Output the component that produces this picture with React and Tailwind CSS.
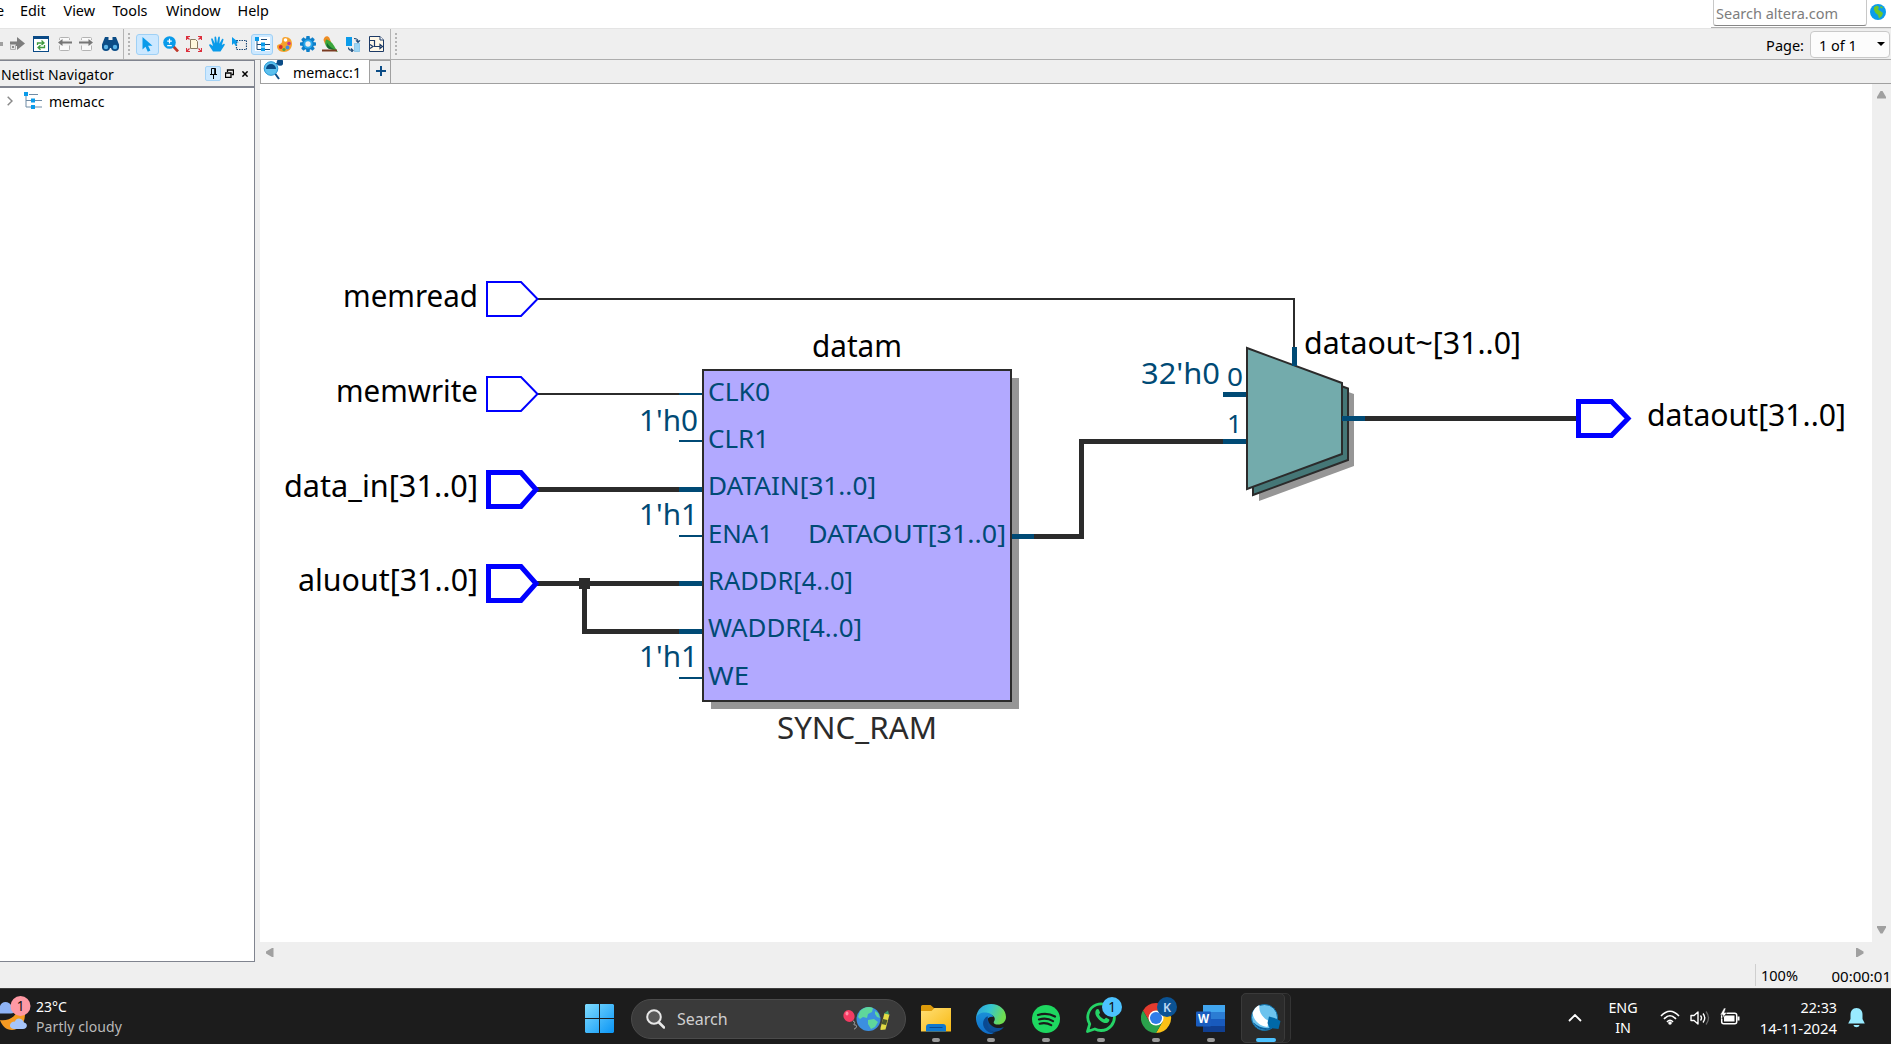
import React from "react";

const FONT = "font-['Noto_Sans','Open_Sans',sans-serif]";

/* ---------- toolbar icons ---------- */
const Svg = ({ w = 16, h = 16, box, children, className = "" }) => (
  <svg width={w} height={h} viewBox={box || `0 0 ${w} ${h}`} className={`block shrink-0 ${className}`}>{children}</svg>
);

const ForwardIcon = () => (
  <Svg w={15} h={14}><path d="M0 4.500h7V0l8 6.500L7 13V9H0z" fill="#7d7d7d" /><path d="M.500 7.500h5v5h-5z" fill="#e4e4e4" stroke="#b0b0b0" /><path d="M2 9h2v2H2z" fill="#8a8a8a" /></Svg>
);
const RefreshIcon = () => (
  <Svg>
    <rect x=".5" y=".5" width="15" height="15" fill="#fff" stroke="#0a4a86" />
    <rect width="16" height="3" fill="#0a4a86" />
    <path d="M4.500 9V7h6M8.500 4.500L11 7 8.500 9M11.500 9v2.500H5.500M7.500 9.200L5 11.500l2.500 2.300" fill="none" stroke="#3f9a3f" strokeWidth="1.300" />
  </Svg>
);
const PageArrow = ({ flip }) => (
  <Svg w={14} h={14}>
    <g transform={flip ? "translate(14 0) scale(-1 1)" : undefined}>
      <path d="M1.500 3V1.500a1 1 0 011-1h8a1 1 0 011 1V3M1.500 8.500v4a1 1 0 001 1h8a1 1 0 001-1v-4" fill="#fafafa" stroke="#b3b3b3" />
      <path d="M0 5.500L4.500 2v2.500H14v2H4.500V9z" fill="#777" />
    </g>
  </Svg>
);
const BinocularsIcon = () => (
  <Svg w={17} h={14}>
    <path d="M3 0h3.500v3h4V0H14l3 7.500V11H0V7.500z" fill="#0b4c86" />
    <circle cx="4" cy="10" r="4" fill="#0b4c86" /><circle cx="13" cy="10" r="4" fill="#0b4c86" />
    <circle cx="4" cy="10" r="2.200" fill="#5bb4e8" /><circle cx="13" cy="10" r="2.200" fill="#5bb4e8" />
  </Svg>
);
const PointerIcon = () => (
  <Svg w={11} h={15}><path d="M.5 0v12.500l3-2.800 2.300 5 2.600-1.200-2.300-4.800h4.400z" fill="#0a9bea" /></Svg>
);
const ZoomIcon = () => (
  <Svg>
    <path d="M9.500 9.500l5.500 6" stroke="#c0392b" strokeWidth="2.600" />
    <circle cx="6.500" cy="6.500" r="6.300" fill="#0a9bea" />
    <path d="M6.500 2.800v4.600M4.200 5.100h4.600M4.200 9.600h4.600" stroke="#fff" strokeWidth="1.200" />
  </Svg>
);
const FitIcon = () => (
  <Svg>
    <path d="M4.500 3.500h5l2 2v7h-7z" fill="#fff8dc" stroke="#8a7a60" />
    <path d="M.5 4V.5H4M.5.5l3 3M12 .5h3.500V4M15.500.5l-3 3M.5 12v3.500H4M.5 15.500l3-3M12 15.500h3.500V12M15.500 15.500l-3-3" fill="none" stroke="#dc2f3c" strokeWidth="1.200" />
  </Svg>
);
const HandIcon = () => (
  <Svg w={16} h={16}>
    <path d="M4 15.500C2.600 13 1 11 .2 9.400c-.4-1 .8-1.500 1.600-.8L4 10 2.200 3.500c-.3-1.200 1.200-1.600 1.600-.5L5.700 7.500 5.500 1.300c0-1.200 1.600-1.200 1.700 0l.8 6 1.200-6C9.500.1 11 .4 10.900 1.500l-.5 6.300 2.500-4.500c.6-1 1.900-.4 1.500.7L12.800 9l1.700-1c1-.5 1.800.5 1 1.300l-4 6.200z" fill="#0a9bea" />
  </Svg>
);
const SelectIcon = () => (
  <Svg w={15} h={14}>
    <rect x="4.500" y="3.500" width="10" height="9" fill="none" stroke="#1d4a78" strokeWidth="1.200" strokeDasharray="1.500 1" />
    <path d="M0 0v8l2-1.700L3.600 9l1.500-.8L3.800 5.600h3z" fill="#0a9bea" />
  </Svg>
);
const TreeIcon = () => (
  <Svg w={15} h={14}>
    <rect width="15" height="14" fill="#fff" />
    <path d="M2 3v9.500h4M2 7.500h4M6 2.500h6M10 7.500h5M10 12.500h5" fill="none" stroke="#1d4a78" />
    <rect x="0" y="0" width="4" height="4" fill="#0a9bea" /><rect x="6" y="5.500" width="4" height="4" fill="#0a9bea" /><rect x="6" y="10.500" width="4" height="3.500" fill="#0a9bea" />
  </Svg>
);
const PaletteIcon = () => (
  <Svg w={15} h={15}>
    <path d="M8 0c5 0 7 3 7 7 0 5-4 8-8 8-4.500 0-7-3-7-5.500C0 7 3 8 4.500 6S4 0 8 0z" fill="#f7a12b" />
    <circle cx="8.500" cy="3" r="1.800" fill="#fff" /><circle cx="12" cy="6.500" r="1.800" fill="#c9348b" /><circle cx="10.500" cy="10.500" r="1.900" fill="#3f8fe0" /><circle cx="3.800" cy="10" r="1.900" fill="#d62f2f" /><circle cx="7" cy="12.500" r="1.600" fill="#4aa84a" />
  </Svg>
);
const GearIcon = () => (
  <Svg>
    <g transform="translate(8 8)" fill="#0d7fc9">
      {[0, 45, 90, 135].map((a) => <rect key={a} x="-1.800" y="-8" width="3.600" height="16" rx=".8" transform={`rotate(${a})`} />)}
      <circle r="6" /><circle r="4.600" fill="#29a9ee" /><circle r="2.700" fill="#efefef" />
    </g>
  </Svg>
);
const BirdIcon = () => (
  <Svg w={17} h={16}>
    <path d="M1.500 4C2 1 4-.3 6 .5 8 1.500 8 4 9 6L3 8z" fill="#ef8b22" />
    <path d="M4 3.500c4 .5 7 4 9 8l3 4.500-7-2.500C5 12 1.500 9 4 3.500z" fill="#3ba63a" />
    <path d="M5 7c2 3 4 5 8 6.500l-6-.5C5 12 4 9 5 7z" fill="#186b2f" />
    <path d="M0 14.500h15" stroke="#7a3b22" strokeWidth="2" />
  </Svg>
);
const SwapIcon = () => (
  <Svg w={15} h={15}>
    <rect x="0" y="0" width="6" height="9" fill="#0a9bea" />
    <rect x="8.500" y="6.500" width="5" height="8" fill="#9bd4f4" stroke="#58b2e4" strokeDasharray="1 1" />
    <path d="M8 1.500c3 0 4 1 4 3M10 3.300l2 2 2-2M2.500 10.500c0 2 1 3 4 3M5 11.500l2 2-2 2" fill="none" stroke="#1d4a78" strokeWidth="1.200" />
  </Svg>
);
const SchematicIcon = () => (
  <Svg w={15} h={16}>
    <path d="M.5.500h10.500l3.500 3.500v11.500H.5z" fill="#fff8e8" stroke="#1d3a66" />
    <path d="M0 4.500h5.500v6h6M11 8.500l2.500 2-2.500 2zM1 12.500l3-2-3-2" fill="none" stroke="#1d3a66" strokeWidth="1.200" />
    <path d="M11 .5V4h3.500" fill="#fff" stroke="#1d3a66" />
  </Svg>
);
const Grip = ({ className = "" }) => (
  <svg width="3" height="22" className={`block shrink-0 ${className}`}>
    {[0, 1, 2, 3, 4, 5].map((i) => <rect key={i} x="0" y={i * 4} width="2" height="2" fill="#b4b4b4" />)}
  </svg>
);

/* ---------- menu, toolbar ---------- */
function MenuBar() {
  return (
    <div className="flex h-[28px] shrink-0 items-start bg-white text-[14.400px] leading-[20px] text-black">
      <div className="flex pt-[1px]">
        <span className="-ml-[4px] w-[24px]">e</span>
        <span className="w-[43.500px]">Edit</span>
        <span className="w-[49px]">View</span>
        <span className="w-[53.500px]">Tools</span>
        <span className="w-[71.500px]">Window</span>
        <span>Help</span>
      </div>
      <div className="ml-auto flex h-[28px] w-[180px] border-b border-[#b0b0b0]">
        <div className="ml-[2px] flex h-[26px] w-[154px] items-center rounded-b-[3px] border border-t-0 border-[#c8c8c8] border-b-[#868686] pl-[2px] pt-[1px] text-[14.500px] text-[#7d7d7d]">Search altera.com</div>
        <Svg w={16} h={16} className="ml-[3px] mt-[4px]">
          <circle cx="8" cy="8" r="8" fill="#0a9dec" />
          <path d="M4 3l3-1.500 2 1.500-1 2.500 3 2 2 1.500-1 3-3 2.500-1-3.500-2.500-2L4 6zM11 2l2 1.500-1 1-2-1z" fill="#6fc72b" />
        </Svg>
      </div>
    </div>
  );
}

const Slot = ({ w, children, active }) => (
  <div className={`flex h-[21px] shrink-0 items-center justify-center ${w} ${active ? "rounded-[3px] border border-[#9fd0f5] bg-[#cce8ff]" : ""}`}>{children}</div>
);

function Toolbar() {
  return (
    <div className="flex h-[32px] shrink-0 items-center border-b border-[#adadad] border-t border-t-[#e4e4e4] bg-[#efefef]">
      <div className="h-[4px] w-[3px] bg-[#a0a0a0]" />
      <div className="ml-[7px]"><ForwardIcon /></div>
      <div className="ml-[8px]"><RefreshIcon /></div>
      <div className="ml-[9px]"><PageArrow /></div>
      <div className="ml-[7px]"><PageArrow flip /></div>
      <div className="ml-[9px]"><BinocularsIcon /></div>
      <div className="ml-[4px] h-[30px] w-px bg-[#b5b5b5]" />
      <Grip className="ml-[4px]" />
      <div className="ml-[5px] flex items-center">
        <Slot w="w-[23px]" active><PointerIcon /></Slot>
        <Slot w="w-[23px]"><ZoomIcon /></Slot>
        <Slot w="w-[23px]"><FitIcon /></Slot>
        <Slot w="w-[23px]"><HandIcon /></Slot>
        <Slot w="w-[23px]"><SelectIcon /></Slot>
        <Slot w="w-[22px]" active><TreeIcon /></Slot>
        <Slot w="w-[23px]"><PaletteIcon /></Slot>
        <Slot w="w-[23px]"><GearIcon /></Slot>
        <Slot w="w-[23px]"><BirdIcon /></Slot>
        <Slot w="w-[23px]"><SwapIcon /></Slot>
        <Slot w="w-[23px]"><SchematicIcon /></Slot>
      </div>
      <div className="ml-[2px] h-[30px] w-px bg-[#b5b5b5]" />
      <Grip className="ml-[4px]" />
      <div className="ml-auto flex items-center text-[14.500px] text-black">
        <span className="mr-[6px] mt-[3px]">Page:</span>
        <div className="mr-[1px] flex h-[27px] w-[80px] items-center rounded-[4px] border border-[#c9c9c9] bg-[#fcfcfc] pl-[8px]">
          <span className="mt-[3px]">1 of 1</span>
          <Svg w={8} h={4} className="ml-auto mr-[4px]"><path d="M0 0h8L4 4z" fill="#000" /></Svg>
        </div>
      </div>
    </div>
  );
}

/* ---------- navigator ---------- */
function Navigator() {
  return (
    <div className="flex h-[902px] w-[255px] shrink-0 flex-col border-b border-r border-[#80848f] bg-white">
      <div className="flex h-[28px] shrink-0 items-center border-b-2 border-t border-[#80848f] bg-[#efefef]">
        <span className="ml-[1px] mt-[2px] text-[14px] tracking-[0.1px] text-black">Netlist Navigator</span>
        <div className="ml-auto mr-[6px] flex items-center">
          <div className="flex h-[15px] w-[16px] items-center justify-center rounded-[2px] border border-[#a4d3f7] bg-[#cce8ff] pl-px">
            <Svg w={7} h={11}><path d="M1.500 6V.500h4V6M0 6.500h7M3.500 6.500V11M4.700 0v6" fill="none" stroke="#000" /></Svg>
          </div>
          <Svg w={9} h={9} className="ml-[4px]"><path d="M2.500 3V1h6v4.500H6.500M2 .8h7" fill="none" stroke="#000" strokeWidth="1.300" /><path d="M.5 4h5.500v4.300H.5zM0 4h6.500" fill="none" stroke="#000" strokeWidth="1.300" /></Svg>
          <Svg w={6} h={6} className="ml-[8px]"><path d="M.4.4l5.200 5.200M5.600.4L.4 5.600" stroke="#000" strokeWidth="1.500" /></Svg>
        </div>
      </div>
      <div className="flex h-[25px] items-center">
        <Svg w={6} h={10} className="ml-[7px]"><path d="M.7.7L5 5 .7 9.300" fill="none" stroke="#8a8a8a" strokeWidth="1.500" /></Svg>
        <Svg w={18} h={17} className="ml-[11px]">
          <path d="M2 3v12h5M2 8.500h5M5 2.500h9M11 8.500h7M11 15h7" fill="none" stroke="#6f8ba5" />
          <rect x="0" y="0" width="4" height="4" fill="#0a9bea" /><rect x="7" y="6.500" width="4" height="4" fill="#0a9bea" /><rect x="7" y="13" width="4" height="4" fill="#0a9bea" />
        </Svg>
        <span className="ml-[7px] mt-[2px] text-[14px] text-black">memacc</span>
      </div>
    </div>
  );
}

/* ---------- schematic ---------- */
const INK = "#2b2b2b";
const PIN = "#004a75";

const LABELS = [
  ["memread", 343, 307, 135, 30, "#000"],
  ["memwrite", 336, 402, 142, 30, "#000"],
  ["data_in[31..0]", 284, 496.500, 194, 30, "#000"],
  ["aluout[31..0]", 298, 591, 180, 30, "#000"],
  ["1'h0", 639, 431, 59, 29, PIN],
  ["1'h1", 639, 525, 59, 29, PIN],
  ["1'h1", 639, 667, 59, 29, PIN],
  ["CLK0", 708, 401, 62, 25, PIN],
  ["CLR1", 708, 448, 61, 25, PIN],
  ["DATAIN[31..0]", 708, 495, 168, 25, PIN],
  ["ENA1", 708, 543, 65, 25, PIN],
  ["DATAOUT[31..0]", 808, 543, 198, 25, PIN],
  ["RADDR[4..0]", 708, 590, 145, 25, PIN],
  ["WADDR[4..0]", 708, 637, 154, 25, PIN],
  ["WE", 708, 685, 41, 25, PIN],
  ["datam", 812, 357, 90, 30, "#000"],
  ["SYNC_RAM", 777, 739, 160, 30, INK],
  ["32'h0", 1141, 384, 79, 29, PIN],
  ["0", 1227, 385.500, 16, 25, PIN],
  ["1", 1227, 433, 15, 25, PIN],
  ["dataout~[31..0]", 1304, 353.500, 217, 30, "#000"],
  ["dataout[31..0]", 1647, 426, 199, 30, "#000"],
];

function Schematic() {
  return (
    <svg width="1612" height="858" viewBox="260 84 1612 858" className="block shrink-0 bg-white">
      <g fill="none" stroke={INK} strokeWidth="2" shapeRendering="crispEdges">
        <path d="M537 299H1294V347M537 394H679" />
        <path d="M536 489.500H679M536 583.500H679M584.500 583.500V631.500H679M1034 536.500H1081.500V441.500H1223M1365 418.500H1577" strokeWidth="5" />
      </g>
      <rect x="579" y="578" width="11" height="11" fill={INK} />
      <rect x="711" y="378" width="308" height="331" fill="#969696" />
      <rect x="703" y="370" width="308" height="331" fill="#b2a9ff" stroke={INK} strokeWidth="2" />
      <path d="M1259 360L1354 394V466L1259 501z" fill="#969696" />
      <path d="M1253 354L1348 388.500V460L1253 495z" fill="#457777" stroke={INK} strokeWidth="2" />
      <path d="M1247 348L1342 383V454L1247 489z" fill="#73abac" stroke={INK} strokeWidth="2" />
      <g fill="none" stroke={PIN} strokeWidth="5" shapeRendering="crispEdges">
        <path d="M679 394H702M679 441H702M679 536H702M679 678H702" strokeWidth="2" />
        <path d="M679 489.500H702M679 583.500H702M679 631.500H702M1012 536.500H1034M1223 394.500H1246M1223 441.500H1246M1342 418.500H1365M1294.500 347V366" />
      </g>
      <g fill="#fff" stroke="#0000ff">
        <path d="M487 282H521L537.500 299 521 316H487z" strokeWidth="2" />
        <path d="M487 377H521L537.500 394 521 411H487z" strokeWidth="2" />
        <path d="M488.500 472.500H521L536 489.500 521 506.500H488.500z" strokeWidth="5" />
        <path d="M488.500 566.500H521L536 583.500 521 600.500H488.500z" strokeWidth="5" />
        <path d="M1578.500 401.500H1611.500L1628 418.500 1611.500 435.500H1578.500z" strokeWidth="5" />
      </g>
      {LABELS.map(([t, x, y, w, s, c], i) => (
        <text key={i} x={x} y={y} fontSize={s} fill={c} textLength={w} lengthAdjust="spacingAndGlyphs">{t}</text>
      ))}
    </svg>
  );
}

function Workspace() {
  return (
    <div className="ml-[5px] flex min-w-0 flex-1 flex-col">
      <div className="flex h-[24px] shrink-0 border-b border-[#a0a0a0]">
        <div className="-mb-px flex h-[24px] w-[110px] items-center border border-t-0 border-[#a0a0a0] bg-white">
          <Svg w={20} h={20} className="ml-[2px] -mt-[3px]">
            <path d="M11 12l5 7" stroke="#0b4c86" strokeWidth="2" />
            <path d="M11 5l5-3" stroke="#0b4c86" /><circle cx="17" cy="2.500" r="3.300" fill="#0b4c86" />
            <circle cx="8" cy="8.500" r="7" fill="#5cc0ee" /><path d="M3 9a5 5 0 0110 0z" fill="#0b4c86" /><circle cx="8" cy="8.500" r="6.800" fill="none" stroke="#2e9bd6" />
          </Svg>
          <span className="ml-[10px] mt-[2px] text-[14.200px] text-black">memacc:1</span>
        </div>
        <div className="-mb-px flex h-[24px] w-[21px] items-center justify-center border border-l-0 border-[#a0a0a0] pb-[2px] pl-px">
          <Svg w={10} h={10}><path d="M5 0v10M0 5h10" stroke="#0b4c86" strokeWidth="2" /></Svg>
        </div>
      </div>
      <div className="flex">
        <Schematic />
        <div className="flex w-[19px] flex-col items-center justify-between pb-[8px] pt-[7px]">
          <Svg w={9} h={8}><path d="M3.500 0h2L9 6v1.500H0V6z" fill="#a0a0a0" /></Svg>
          <Svg w={9} h={8}><path d="M0 0h9v1.500l-3.500 6h-2L0 1.500z" fill="#a0a0a0" /></Svg>
        </div>
      </div>
      <div className="flex h-[20px] w-[1612px] items-center justify-between pl-[6px] pr-[8px]">
        <Svg w={8} h={9}><path d="M7.500 0v9H6L0 5.500v-2L6 0z" fill="#a0a0a0" /></Svg>
        <Svg w={8} h={9}><path d="M0 0v9h1.500l6-3.500v-2l-6-3.500z" fill="#a0a0a0" /></Svg>
      </div>
    </div>
  );
}

/* ---------- taskbar ---------- */
const TaskItem = ({ children }) => (
  <div className="relative flex h-[55px] w-[55px] shrink-0 items-center justify-center pt-[4px]">
    {children}
    <div className="absolute bottom-[2px] h-[4px] w-[8px] rounded-full bg-[#9a9a9a]" />
  </div>
);

const WeatherIcon = () => (
  <Svg w={31} h={38} className="mt-[2px]">
    <path d="M0 25c7 1 15-2 17-9l8 3c0 10-6 16-13 16C6 35 2 31 0 25z" fill="#f59a22" />
    <path d="M-5 18.500h16c5 0 5-6 1-6.500C10 6 2 5 0 11h-5z" fill="#8fb4f5" />
    <path d="M14 34h9c5 0 5-6 1-6.500-2-5-8-5-9-1-6 0-7 7-1 7.500z" fill="#a6c5fb" />
    <circle cx="20.500" cy="11" r="10" fill="#ff99a4" />
    <text x="20.500" y="16" fontSize="13.500" textAnchor="middle" fill="#111">1</text>
  </Svg>
);

const StartIcon = () => (
  <Svg w={29} h={29} className="mt-[4px]">
    <defs><linearGradient id="win" x1="0" y1="0" x2="1" y2="1"><stop offset="0" stopColor="#7fdcff" /><stop offset="1" stopColor="#0a95f5" /></linearGradient></defs>
    <path d="M1 0h13v14H0V1zM15 0h13l1 1v13H15zM0 15h14v14H1l-1-1zM15 15h14v13l-1 1H15z" fill="url(#win)" />
  </Svg>
);

const SearchArt = () => (
  <Svg w={48} h={26}>
    <path d="M10 15c4 1-1 4 2 4s1 4-1 4" fill="none" stroke="#aaa" />
    <ellipse cx="6" cy="10" rx="5.500" ry="6" fill="#f43b63" transform="rotate(-25 6 10)" /><ellipse cx="4" cy="7.500" rx="1.500" ry="2" fill="#ff8fa6" />
    <circle cx="25.500" cy="13" r="12" fill="#3b8fe0" />
    <path d="M17 5c4-4 9-5 13-3l-1 4-4 2-1 4-4-1-3 2-2-2zM25 14l6-1 4 3-3 5-4 2-3-5zM32 5l3 2 2 5-3-1-2-3z" fill="#5fd79b" />
    <path d="M37.500 22l4-15 5 1.500-4 15-5 .5z" fill="#e2dc45" /><path d="M41 7.500l4-3 1 4z" fill="#3d9d6b" /><path d="M40 13l4.500 1-1.500 5-4.500-1z" fill="#49582a" />
  </Svg>
);

const ExplorerIcon = () => (
  <Svg w={30} h={27}>
    <path d="M0 1.500Q0 0 1.500 0h8L13 3h14v6H0z" fill="#dc9a0a" />
    <defs><linearGradient id="fold" x1="0" y1="0" x2="1" y2="1"><stop offset="0" stopColor="#ffdf75" /><stop offset="1" stopColor="#f8b912" /></linearGradient></defs>
    <path d="M0 6h10.500l3-3H30v23.500H0z" fill="url(#fold)" />
    <path d="M5 26.500V22q0-3 3-3h14q3 0 3 3v4.500z" fill="#0f78cf" /><path d="M8.500 22.500h13" stroke="#0a4a92" />
  </Svg>
);

const EdgeIcon = () => (
  <Svg w={30} h={30}>
    <defs>
      <linearGradient id="e1" x1="0" y1="0" x2="1" y2=".3"><stop offset="0" stopColor="#2a9be0" /><stop offset=".5" stopColor="#35c5d0" /><stop offset="1" stopColor="#6fdd50" /></linearGradient>
      <linearGradient id="e2" x1="0" y1="0" x2="0" y2="1"><stop offset="0" stopColor="#1a8fd8" /><stop offset="1" stopColor="#0f6cc8" /></linearGradient>
    </defs>
    <path d="M0 14C1 5 7 0 15 0c9 0 15 6 15 13 0 5-4 7.500-8 7.500-3.500 0-5-1.500-4-3 2-3 0-7-5-7-6 0-11 2-13 6z" fill="url(#e1)" />
    <path d="M0 14c1-4 6-6 10-5.500 4 .3 6.500 2 7.500 4.500-4-1-8 2-8 7 0 4 3 8 8 9.700C8 31.500 0 24 0 14z" fill="url(#e2)" />
    <path d="M12 12c-4 3-5 8-1 12.500 4 5 12 4.500 17-1.500 0 0-3 1.500-7 1-6-1-10-6-9-12z" fill="#0d4f97" />
    <path d="M11 12.500c-5 3-5.500 10 0 14.500 2.500 2 6 2.800 9 2-6-1-10-7-9-16.500z" fill="#0a4a92" />
  </Svg>
);

const SpotifyIcon = () => (
  <Svg w={28} h={28}>
    <circle cx="14" cy="14" r="14" fill="#1ed760" />
    <path d="M6 10c6-1.800 12-1.200 17 1.500M7 14.500c5-1.400 10-.8 14 1.600M7.700 18.700c4-1.100 8-.6 11.500 1.400" fill="none" stroke="#1b1b1b" strokeWidth="2.200" strokeLinecap="round" />
  </Svg>
);

const WhatsAppIcon = () => (
  <Svg w={36} h={38}>
    <path d="M1.500 34.500l2.200-7.400A13.300 13.300 0 1115 33.500c-2.400 0-4.300-.5-6.200-1.500z" fill="none" stroke="#25d366" strokeWidth="2.800" strokeLinejoin="round" />
    <path d="M10 13c1-1.500 2.500-1.500 3 0l1 2.500c.2.700-1.200 1.500-1 2.200 1 2 2.800 3.600 5 4.500.8.200 1.500-1.700 2.300-1.400l2.700 1.400c1 .6 0 3-1.500 3.600-5 1.700-12-5.500-12.200-9.800 0-1.200.2-2.300.7-3z" fill="#25d366" />
    <circle cx="26" cy="10" r="10" fill="#4cc2ff" />
    <text x="26" y="15" fontSize="13.500" textAnchor="middle" fill="#111">1</text>
  </Svg>
);

const ChromeIcon = () => (
  <Svg w={36} h={37}>
    <g transform="translate(15 21)">
      <path d="M-13 -7.500A15 15 0 0113 -7.500L0 -7.500-6.500 3.700z" fill="#e33b2e" />
      <path d="M13 -7.500A15 15 0 010 15L6.500 3.700 0 -7.500z" fill="#fbc116" />
      <path d="M0 15A15 15 0 01-13 -7.500L-6.500 3.700 6.500 3.700z" fill="#2ba24c" />
      <circle r="7.500" fill="#fff" /><circle r="6" fill="#2f7de9" />
    </g>
    <circle cx="26" cy="10" r="10" fill="#0b5394" />
    <text x="26" y="14.500" fontSize="12.500" textAnchor="middle" fontWeight="600" fill="#bcd9f5">K</text>
  </Svg>
);

const WordIcon = () => (
  <Svg w={30} h={28}>
    <path d="M7 0h22v7H7z" fill="#41a5ee" /><path d="M7 7h22v7H7z" fill="#2b7cd3" /><path d="M7 14h22v7H7z" fill="#185abd" /><path d="M7 21h22v6H7z" fill="#103f91" />
    <rect x="0" y="6.500" width="15" height="15" rx="1" fill="#1a5cbe" />
    <text x="7.500" y="18" fontSize="11.500" textAnchor="middle" fontWeight="700" fill="#fff">W</text>
  </Svg>
);

const QuartusIcon = () => (
  <Svg w={30} h={28}>
    <circle cx="13.500" cy="13.500" r="13" fill="#6cc3ee" stroke="#0b6ea8" />
    <path d="M1.500 9C3 5 5 2.500 8.500 1c-1 6 2 12 9 16l-1 6C8 22 2.500 16 1.500 9z" fill="#fff" />
    <path d="M2 18c3 7 13 11 21 5-7 2.500-15 1-21-5z" fill="#0b5f9c" />
    <path d="M18 12.500l5.500 1.500 6 3-2 8-9-1-2-5z" fill="#0068a8" />
  </Svg>
);

function Taskbar() {
  return (
    <div className="flex h-[56px] shrink-0 items-center border-t border-[#3d3d3d] bg-[#1c1c1c] text-white">
      <div className="flex w-[585px] shrink-0 items-center self-stretch">
        <div className="self-start pt-[4px]"><WeatherIcon /></div>
        <div className="ml-[5px] mt-[1px] text-[14px] leading-[20px]">
          <div className="text-white">23°C</div>
          <div className="tracking-[0.1px] text-[#b9b9b9]">Partly cloudy</div>
        </div>
      </div>
      <StartIcon />
      <div className="ml-[17px] mt-[4px] flex h-[40px] w-[275px] shrink-0 items-center rounded-full border border-[#4b4b4b] bg-[#3a3a3a]">
        <Svg w={19} h={20} className="ml-[14px]"><circle cx="8" cy="8" r="6.800" fill="#595959" stroke="#e8e8e8" strokeWidth="2" /><path d="M13 13.500l5 5" stroke="#e8e8e8" strokeWidth="2.500" strokeLinecap="round" /></Svg>
        <span className="ml-[12px] mt-[1px] text-[16px] text-[#cfcfcf]">Search</span>
        <div className="ml-auto mr-[14px]"><SearchArt /></div>
      </div>
      <div className="ml-[2px] flex">
        <TaskItem><ExplorerIcon /></TaskItem>
        <TaskItem><EdgeIcon /></TaskItem>
        <TaskItem><SpotifyIcon /></TaskItem>
        <TaskItem><div className="-mt-[6px] ml-[6px]"><WhatsAppIcon /></div></TaskItem>
        <TaskItem><div className="-mt-[6px] ml-[6px]"><ChromeIcon /></div></TaskItem>
        <TaskItem><WordIcon /></TaskItem>
        <div className="ml-[3px] mt-[4px] h-[50px] w-[50px] rounded-[5px] border border-[#343434] bg-[#232323]">
          <div className="-ml-px -mt-px flex h-[50px] w-[44px] flex-col items-center rounded-[5px] border border-[#3a3a3a] bg-[#2b2b2b] pt-[10px]">
            <div className="ml-[5px]"><QuartusIcon /></div>
            <div className="ml-[6px] mt-[6px] h-[4px] w-[20px] rounded-full bg-[#4cc2ff]" />
          </div>
        </div>
      </div>
      <div className="ml-auto flex items-center pt-[2px]">
        <Svg w={14} h={8}><path d="M1 7l6-6 6 6" fill="none" stroke="#fff" strokeWidth="1.800" /></Svg>
        <div className="ml-[26px] w-[30px] text-center text-[14.300px] leading-[20px]">ENG<br />IN</div>
        <Svg w={20} h={15} className="ml-[22px]">
          <path d="M1 6Q10-3.500 19 6M4 9Q10 2.500 16 9M7 12Q10 8.500 13 12" fill="none" stroke="#fff" strokeWidth="1.600" /><circle cx="10" cy="13" r="1.800" fill="#fff" />
        </Svg>
        <Svg w={20} h={16} className="ml-[10px]">
          <path d="M1 5.500h3L8 2v12L4 10.500H1z" fill="none" stroke="#fff" strokeWidth="1.400" strokeLinejoin="round" />
          <path d="M10.500 5.500q2 2.500 0 5M13 3.500q3.500 4.500 0 9" fill="none" stroke="#fff" strokeWidth="1.400" /><path d="M16 1.500q5 6.500 0 13" fill="none" stroke="#666" strokeWidth="1.300" />
        </Svg>
        <Svg w={20} h={17} className="ml-[10px] -mt-[2px]">
          <rect x="1.700" y="5.200" width="15" height="10.500" rx="2" fill="none" stroke="#fff" strokeWidth="1.500" /><rect x="4" y="7.500" width="10.500" height="6" fill="#fff" /><rect x="17.500" y="8.500" width="2" height="4" fill="#fff" />
          <path d="M4 0L0 7h3l-1 4 5-6.500H4.500L6 0z" fill="#fff" stroke="#1c1c1c" strokeWidth=".6" />
        </Svg>
        <div className="ml-[12px] w-[85px] whitespace-nowrap text-right text-[14.800px] leading-[20px]"><div className="text-[14.300px]">22:33</div>14-11-2024</div>
        <Svg w={17} h={20} className="ml-[11px] mr-[26px]">
          <path d="M8.500 0c4 0 6 3 6 6.500V11l2.300 4.500H.2L2.500 11V6.500C2.500 3 4.500 0 8.500 0zM5.500 17h6c-.5 3-5.500 3-6 0z" fill="#99ebff" />
        </Svg>
      </div>
    </div>
  );
}

export default function App() {
  return (
    <div className={`flex h-[1044px] w-[1891px] flex-col overflow-hidden bg-[#efefef] ${FONT}`}>
      <MenuBar />
      <Toolbar />
      <div className="flex h-[902px] shrink-0">
        <Navigator />
        <Workspace />
      </div>
      <div className="flex h-[26px] shrink-0 justify-end text-[15px] text-black">
        <div className="mt-[2px] flex h-[22px] w-[136px] items-center border-l border-[#cfcfcf] pt-[2px]">
          <span className="ml-[5px] text-[14.500px]">100%</span>
          <span className="ml-auto">00:00:01</span>
        </div>
      </div>
      <Taskbar />
    </div>
  );
}
